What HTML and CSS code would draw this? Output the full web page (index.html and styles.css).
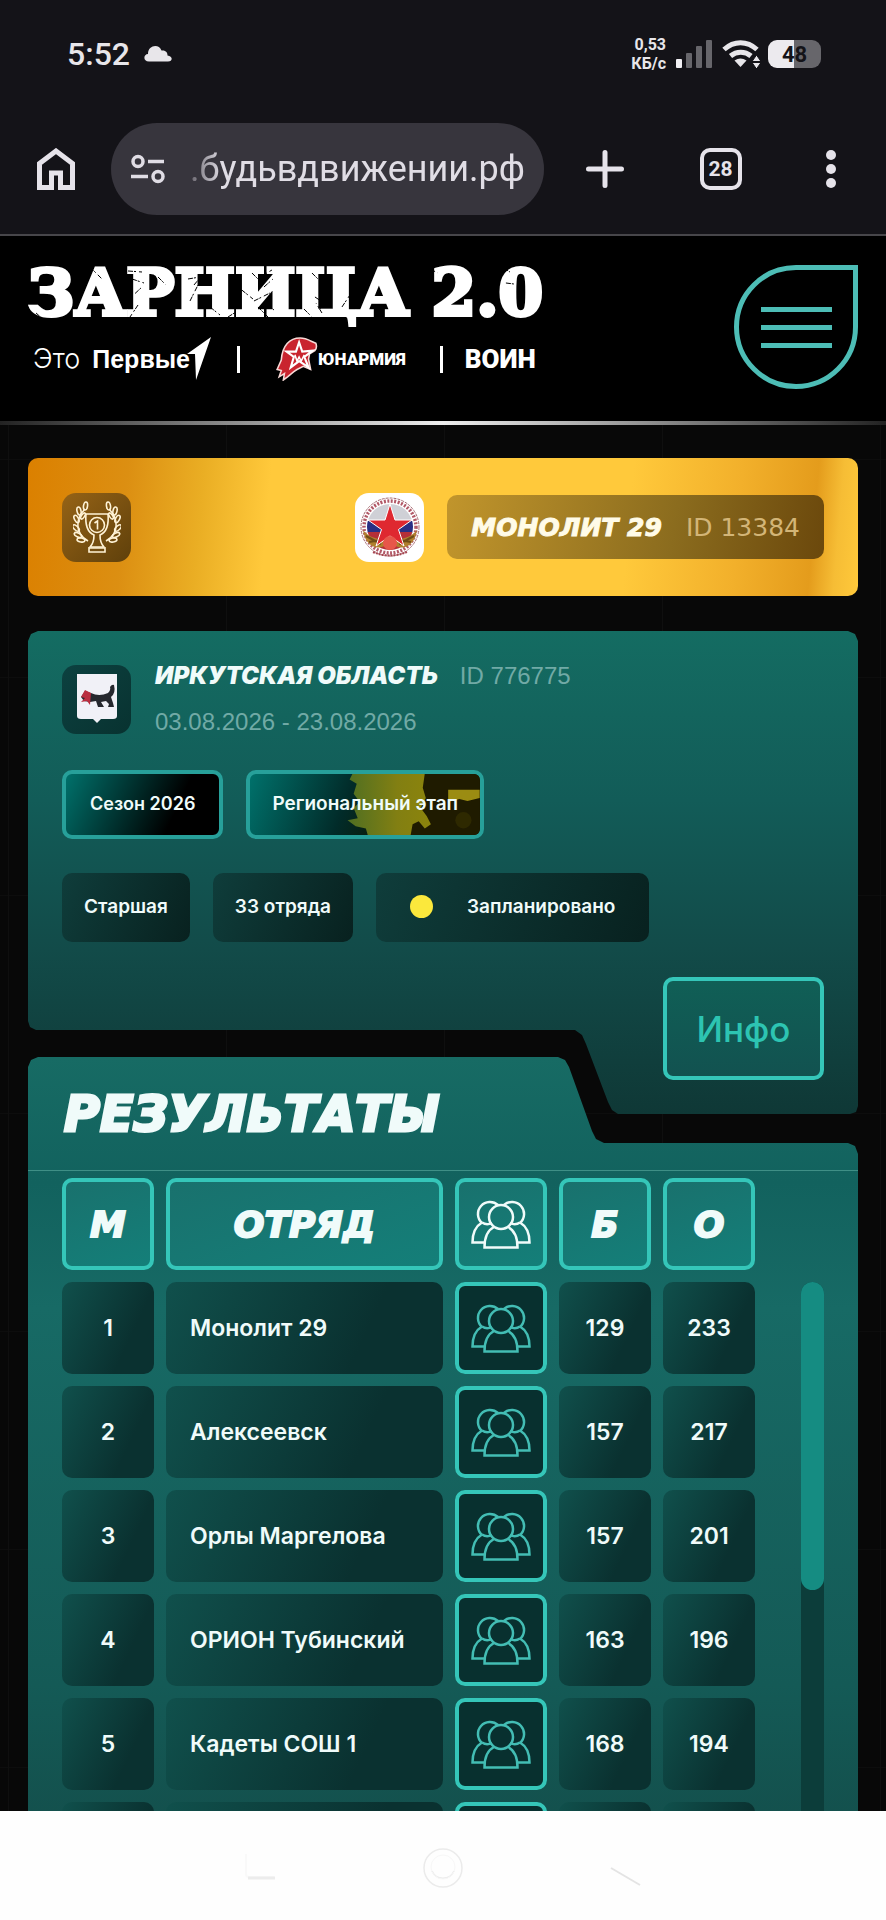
FILE: index.html
```html
<!DOCTYPE html>
<html lang="ru">
<head>
<meta charset="utf-8">
<meta name="viewport" content="width=device-width, initial-scale=1">
<title>Зарница 2.0</title>
<link rel="stylesheet" href="styles.css">
</head>
<body>
<svg class="sprite" aria-hidden="true">
  <symbol id="team" viewBox="0 0 60 50">
    <g fill="none" stroke="currentColor" stroke-width="2.500">
      <path d="M11 24A12 12 0 1 1 27 6"/>
      <path d="M33 6A12 12 0 1 1 49 24"/>
      <circle cx="30" cy="18" r="12"/>
      <path d="M11 23.500C5 27 1.500 33 1.500 43.500H14"/>
      <path d="M49 23.500C55 27 58.500 33 58.500 43.500H46"/>
      <path d="M11 23.500C14 25.500 18 25.500 21 24M49 23.500C46 25.500 42 25.500 39 24"/>
      <path d="M23 28C17 31 13.500 37 13.500 48.500H46.500C46.500 37 43 31 37 28"/>
    </g>
  </symbol>
</svg>

<div class="status">
  <span class="clock">5:52</span>
  <svg class="cloud" width="28" height="16" viewBox="0 0 28 16"><path fill="#e8e6ea" d="M5 15.500C-1.500 15.500-.5 8 4 8 4-1 15-2.500 17.500 4.500 22 4 23.500 6.500 23.500 9.500 29 10 29 15.500 24 15.500Z"/></svg>
  <span class="speed">0,53<br>КБ/с</span>
  <svg class="signal" width="36" height="28" viewBox="0 0 36 28"><g fill="#67666b"><rect x="10" y="13" width="6" height="15" rx="1"/><rect x="20" y="6" width="6" height="22" rx="1"/><rect x="30" y="0" width="6" height="28" rx="1"/></g><rect x="0" y="19" width="6" height="9" rx="1" fill="#f2f0f4"/></svg>
  <svg class="wifi" width="38" height="28" viewBox="0 0 38 28"><g fill="none" stroke="#e8e6ea" stroke-width="5"><path d="M2 9.500C12 .5 25 .5 35 9.500"/><path d="M8.500 16C14.500 11 23 11 29 16"/></g><path fill="#e8e6ea" d="M12.500 20.500Q18.500 16.500 24.500 20.500L18.500 27Z"/><path fill="#e8e6ea" stroke="#141318" stroke-width="1" d="M34.500 15L39 21.500H30ZM34.500 29L39 22.500H30Z"/></svg>
  <span class="battery">48</span>
</div>

<div class="toolbar">
  <button class="tool tool-home" type="button" aria-label="Домой"><svg width="38" height="42" viewBox="0 0 38 42"><path d="M2.500 39.500V15.500L19 3L35.500 15.500V39.500H23.500V25H14.500V39.500Z" fill="none" stroke="#e6e3ea" stroke-width="5"/></svg></button>
  <div class="address">
    <svg width="36" height="30" viewBox="0 0 36 30"><g fill="none" stroke="#e0dde5" stroke-width="3.500"><circle cx="8" cy="7.500" r="5"/><circle cx="28" cy="22.500" r="5"/><path d="M18 7.500H34M1 22.500H18"/></g></svg>
    <input class="url" type="text" value=".будьвдвижении.рф" aria-label="Адрес страницы">
  </div>
  <button class="tool tool-add" type="button" aria-label="Новая вкладка"><svg width="38" height="38" viewBox="0 0 38 38"><path d="M19 2.500V35.500M2.500 19H35.500" stroke="#e6e3ea" stroke-width="5" stroke-linecap="round"/></svg></button>
  <button class="tool tool-tabs" type="button" aria-label="Вкладки"><span class="tabs">28</span></button>
  <button class="tool tool-more" type="button" aria-label="Меню браузера"><svg width="10" height="38" viewBox="0 0 10 38"><g fill="#e6e3ea"><circle cx="5" cy="5" r="5"/><circle cx="5" cy="19" r="5"/><circle cx="5" cy="33" r="5"/></g></svg></button>
</div>

<header class="site-header">
  <div class="brand">
    <div class="wordmark">
      <a class="brand-title" href="#">ЗАРНИЦА 2.0</a>
      <svg class="scratches" viewBox="0 0 515 60" aria-hidden="true"><path d="M62 2l12 12M8 48l10 9M100 6l14 1M104 14l12 4M99 36l15-14M110 40l-8 12M96 30l6-6M162 36l8-16M166 20l5-6M160 14l12-2M205 18l20 16M224 8l10 10M232 12l12-7M236 22l9-8M226 36l16-8M230 42l12 12M240 40l6 5M262 12l8 12M266 30l6 10M284 8l6 6M292 18l4 9M287 32l12 8M294 48l-6-10M300 30l-8 14M314 42l8-12M388 8l-4-6M392 4l14 1M400 3l10 5M448 14l6-7M455 24l-4 8M474 8l8-6M478 18l8 1M476 3l6 4M130 12l8 8M182 42l10 8M200 52l8-5M276 44l8 8"/></svg>
    </div>
    <div class="partners">
      <a class="first" href="#"><span>Это</span><b>Первые</b><svg width="24" height="44" viewBox="0 0 24 44"><path fill="#fff" d="M24 0L9 43 8 17 0 17Z"/></svg></a>
      <i class="bar"></i>
      <a class="army" href="#"><svg width="42" height="44" viewBox="0 0 40 42"><path fill="#c9242e" stroke="#f7d9d6" stroke-width="1.500" d="M1 31L5 22C6 8 13 1 23 1 29 1 33 4 38 6 39 9 38 12 37 13L32 16 31 21 33 31 26 28 20 31 17 33 11 38 7 41 8 35 3 38 5 32Z"/><path d="M22 5L25 14 35 13 27 19 31 29 22 23 14 29 17 19 10 14 19 14Z" fill="none" stroke="#fff" stroke-width="2"/><path d="M18 17L20 23 22 19 24 23 27 17" stroke="#fff" stroke-width="1.500" fill="none"/></svg><b>ЮНАРМИЯ</b></a>
      <i class="bar"></i>
      <a class="warrior" href="#">ВОИН</a>
    </div>
  </div>
  <button class="burger" type="button" aria-label="Меню"><i></i><i></i><i></i></button>
</header>

<main class="page">
  <section class="winner">
    <span class="tile cup"><svg width="48" height="52" viewBox="0 0 48 52"><g fill="none" stroke="#fff3d6" stroke-width="1.600"><path d="M13 13H35C36 24 34 31 27 34C27 40 28 43 31 46H17C20 43 21 40 21 34C14 31 12 24 13 13Z"/><path d="M16 47H32V51H16Z"/><circle cx="24" cy="24" r="7.500"/><path d="M21.500 22L24.500 20V28.500"/><g id="laurel"><path d="M15 40C2 33 2 18 12 8"/><ellipse cx="12.500" cy="5" rx="2" ry="4" transform="rotate(8 12.500 5)"/><ellipse cx="6" cy="10" rx="2" ry="4" transform="rotate(-12 6 10)"/><ellipse cx="3.500" cy="18" rx="2" ry="4" transform="rotate(-28 3.500 18)"/><ellipse cx="3" cy="27" rx="2" ry="4" transform="rotate(-48 3 27)"/><ellipse cx="5" cy="34" rx="2" ry="4" transform="rotate(-65 5 34)"/><ellipse cx="8" cy="39" rx="2" ry="4" transform="rotate(-80 8 39)"/><ellipse cx="10" cy="15" rx="1.500" ry="3.500" transform="rotate(35 10 15)"/></g><use href="#laurel" transform="matrix(-1 0 0 1 48 0)"/></g></svg></span>
    <span class="tile crest"><svg width="62" height="62" viewBox="0 0 62 62"><defs><clipPath id="disc"><circle cx="31" cy="31" r="23"/></clipPath></defs><circle cx="31" cy="31" r="29" fill="#fff" stroke="#a56b72" stroke-width="1" stroke-dasharray="3 1"/><g clip-path="url(#disc)"><path fill="#cfd0d6" d="M8 8h46v18H8z"/><path fill="#292f84" d="M8 25h46v12H8z"/><path fill="#b52f38" d="M8 36h46v18H8z"/></g><circle cx="31" cy="31" r="26" fill="none" stroke="#b25a68" stroke-width="3.500" stroke-dasharray="2 1.500"/><path d="M4 34C7 54 23 55 31 46C39 55 55 54 58 34C51 42 45 42 38 44H24C16 42 11 42 4 34Z" fill="#b0802e"/><path d="M7 40L22 48M10 46L22 44M55 40L40 48M52 46L40 44" stroke="#704d18" stroke-width="2"/><path d="M31 8L36 24H53L39.500 33.500 45 50 31 40 17 50 22.500 33.500 9 24H26Z" fill="#df2830" stroke="#fff" stroke-width="1"/><circle cx="31" cy="47" r="7" fill="#e7564a"/><path d="M14 56Q31 63 48 56" fill="none" stroke="#a74550" stroke-width="2" stroke-dasharray="2 1"/></svg></span>
    <span class="winner-name"><b>МОНОЛИТ 29</b><span>ID 13384</span></span>
  </section>

  <section class="event">
    <div class="event-head">
      <span class="tile region"><svg width="40" height="50" viewBox="0 0 40 50"><path fill="#f1f1f7" d="M0 0H40V42Q40 45 36 45H24L20 49 16 45H4Q0 45 0 42Z"/><path fill="#26282e" d="M14 19Q22 23 31 19Q34 16 33 13 35 10 37 11 39 19 34 23L36 29 37 33H31L32 30 29 27 24 28 27 33H21L19 27 13 28 7 27 4 23 8 17Z"/><path fill="#b92d3f" d="M8 16L14 19 13 31 10 27 4 28 8 24 4 23Z"/></svg></span>
      <div class="event-text">
        <h2><a href="#">ИРКУТСКАЯ ОБЛАСТЬ</a><span>ID 776775</span></h2>
        <p>03.08.2026 - 23.08.2026</p>
      </div>
    </div>
    <div class="chips">
      <span class="chip chip-season">Сезон 2026</span>
      <span class="chip chip-stage">
        <svg class="stage-art" viewBox="0 0 226 61" preserveAspectRatio="xMaxYMid slice" aria-hidden="true">
          <defs><linearGradient id="glow"><stop offset="0" stop-color="#4f6f22"/><stop offset=".6" stop-color="#827f12"/><stop offset="1" stop-color="#8c840c"/></linearGradient></defs>
          <path fill="#1f1b00" d="M160 0H226V61H150Z"/>
          <path fill="url(#glow)" d="M101 0H172L170 14 173 24 168 34 174 42 178 50 172 54 166 47 160 50 158 61H116L114 54 104 52 96 46 106 44 102 34 108 28 102 20 105 10 98 6Z"/>
          <path fill="#9b8c12" d="M195 16H226V24L214 27 206 25 195 28Z"/>
          <circle cx="210" cy="46" r="8" fill="#2e2900"/>
        </svg>
        <span>Региональный этап</span>
      </span>
    </div>
    <div class="chips">
      <span class="chip">Старшая</span>
      <span class="chip">33 отряда</span>
      <span class="chip chip-state"><i></i>Запланировано</span>
    </div>
    <button class="info" type="button">Инфо</button>
  </section>

  <section class="results">
    <h1>РЕЗУЛЬТАТЫ</h1>
    <div class="results-body">
      <table class="board">
        <thead>
          <tr><th>М</th><th>ОТРЯД</th><th aria-label="Состав"><svg class="team"><use href="#team"/></svg></th><th>Б</th><th>О</th></tr>
        </thead>
        <tbody>
          <tr><td>1</td><td>Монолит 29</td><td><button type="button" aria-label="Состав"><svg class="team"><use href="#team"/></svg></button></td><td>129</td><td>233</td></tr>
          <tr><td>2</td><td>Алексеевск</td><td><button type="button" aria-label="Состав"><svg class="team"><use href="#team"/></svg></button></td><td>157</td><td>217</td></tr>
          <tr><td>3</td><td>Орлы Маргелова</td><td><button type="button" aria-label="Состав"><svg class="team"><use href="#team"/></svg></button></td><td>157</td><td>201</td></tr>
          <tr><td>4</td><td>ОРИОН Тубинский</td><td><button type="button" aria-label="Состав"><svg class="team"><use href="#team"/></svg></button></td><td>163</td><td>196</td></tr>
          <tr><td>5</td><td>Кадеты СОШ 1</td><td><button type="button" aria-label="Состав"><svg class="team"><use href="#team"/></svg></button></td><td>168</td><td>194</td></tr>
          <tr><td></td><td></td><td><button type="button" aria-label="Состав"><svg class="team"><use href="#team"/></svg></button></td><td></td><td></td></tr>
        </tbody>
      </table>
      <div class="scroll"><div class="thumb"></div></div>
    </div>
  </section>
</main>

<nav class="system">
  <button type="button" aria-label="Недавние"><svg width="40" height="44" viewBox="0 0 40 44"><path d="M7 10V30Q7 33 10 33H35" fill="none" stroke="#f9f9f9" stroke-width="2"/><path d="M9 34H36" stroke="#ececec" stroke-width="3"/></svg></button>
  <button type="button" aria-label="Домой"><svg width="44" height="44" viewBox="0 0 44 44"><g fill="none" stroke="#ebebeb" stroke-width="1.500"><circle cx="22" cy="24" r="19"/><path d="M11 27A12 12 0 0 0 33 27"/></g><circle cx="22" cy="23" r="12" fill="none" stroke="#f7f7f7"/></svg></button>
  <button type="button" aria-label="Назад"><svg width="40" height="44" viewBox="0 0 40 44"><path d="M4 24L33 41" stroke="#e4e4e4" stroke-width="2"/></svg></button>
</nav>
</body>
</html>
```

FILE: styles.css
```css
* { box-sizing: border-box; }

body {
  margin: 0;
  height: 100vh;
  display: flex;
  flex-direction: column;
  overflow: hidden;
  background: #141318;
  color: #f0fbfa;
  font-family: Inter, "Liberation Sans", sans-serif;
}

a { color: inherit; text-decoration: none; }
button { padding: 0; border: 0; background: none; font: inherit; color: inherit; }
svg { display: block; flex: none; }
.sprite { position: absolute; width: 0; height: 0; }

/* phone status bar */
.status {
  flex: none;
  height: 108px;
  padding: 0 65px 0 67px;
  display: flex;
  align-items: center;
  font-family: Roboto, sans-serif;
  color: #e8e6ea;
}
.clock { font-size: 32px; font-weight: 500; }
.cloud { margin-left: 14px; }
.speed { margin-left: auto; font-size: 16px; line-height: 19px; font-weight: 700; text-align: right; }
.signal { margin-left: 10px; }
.wifi { margin-left: 10px; }
.battery {
  width: 53px;
  height: 28px;
  margin-left: 8px;
  border-radius: 9px;
  background: linear-gradient(90deg, #eceaee 50%, #67666b 50%);
  color: #141318;
  font-size: 22px;
  line-height: 29px;
  font-weight: 700;
  text-align: center;
}

/* browser toolbar */
.toolbar {
  flex: none;
  height: 128px;
  padding-top: 15px;
  display: flex;
  align-items: flex-start;
  border-bottom: 2px solid #47464a;
}
.tool { height: 92px; display: flex; align-items: center; justify-content: center; }
.tool-home { width: 111px; }
.tool-add { width: 121px; }
.tool-tabs { width: 111px; }
.tool-more { width: 110px; }
.address {
  flex: 1;
  min-width: 0;
  height: 92px;
  padding: 0 12px 0 19px;
  display: flex;
  align-items: center;
  gap: 24px;
  border-radius: 46px;
  background: #37353d;
}
.url {
  flex: 1;
  min-width: 0;
  padding: 0;
  border: 0;
  background: none;
  color: #e0dde5;
  font: 36px Roboto, sans-serif;
  -webkit-mask-image: linear-gradient(90deg, rgba(0, 0, 0, .3), #000 32px);
  mask-image: linear-gradient(90deg, rgba(0, 0, 0, .3), #000 32px);
}
.tabs {
  width: 42px;
  height: 42px;
  border: 4px solid #e6e3ea;
  border-radius: 10px;
  color: #e6e3ea;
  font: 700 21px/35px Roboto, sans-serif;
}

/* site header */
.site-header {
  flex: none;
  height: 189px;
  padding: 29px 28px 0;
  display: flex;
  justify-content: space-between;
  align-items: flex-start;
  background: #000;
  border-bottom: 4px solid;
  border-image: linear-gradient(90deg, #222, #eee 50%, #222) 1;
}
.wordmark { position: relative; }
.brand-title {
  display: block;
  color: #fff;
  font: 700 64px/56px "DejaVu Serif", serif;
  -webkit-text-stroke: 4px #fff;
  white-space: nowrap;
}
.scratches { position: absolute; inset: 0; width: 100%; fill: none; stroke: #000; stroke-width: 1; stroke-dasharray: 5 1 2 3; }
.partners { height: 44px; margin-top: 16px; display: flex; align-items: center; color: #fff; }
.first { display: flex; align-items: center; padding-left: 5px; font: 25px/40px "Liberation Sans", sans-serif; }
.first span { font: 300 27px/40px Inter, sans-serif; margin-right: 12px; }
.first svg { margin-left: -3px; }
.bar { width: 3px; height: 27px; margin: 0 36px 0 26px; background: #fff; }
.army + .bar { margin: 0 22px 0 34px; }
.army { display: flex; align-items: center; font: 17px/40px Roboto, sans-serif; }
.army b { font-weight: 900; }
.warrior { font: 900 26px/40px Roboto, sans-serif; }
.burger {
  width: 124px;
  height: 124px;
  border: 5px solid #4dbdb6;
  border-radius: 50% 0 50% 50%;
  display: flex;
  flex-direction: column;
  align-items: center;
  justify-content: center;
  gap: 13px;
}
.burger i { width: 71px; height: 5px; background: #4dbdb6; }

/* page */
.page {
  flex: 1;
  min-height: 0;
  overflow: hidden;
  padding: 33px 28px 0;
  background:
    repeating-linear-gradient(90deg, transparent 0 8px, #0f0f0f 8px 9px, transparent 9px 218px),
    repeating-linear-gradient(180deg, transparent 0 34px, #0d0d0d 34px 35px, transparent 35px 218px),
    #080808;
}
.tile {
  flex: none;
  width: 69px;
  height: 69px;
  border-radius: 14px;
  display: flex;
  align-items: center;
  justify-content: center;
}

.winner {
  height: 138px;
  padding: 0 34px;
  display: flex;
  align-items: center;
  border-radius: 10px;
  background: linear-gradient(95deg, #db8000 0%, #dc8f12 12%, #eaae24 21%, #ffc93b 29%, #ffc93b 72%, #f2b02b 85%, #e49c1c 94%, #f6bd35 97%, #ffc93b 100%);
}
.cup { background: linear-gradient(135deg, #966316, #5f400b); }
.crest { margin-left: auto; background: #fff; }
.winner-name {
  height: 64px;
  margin-left: 23px;
  padding: 0 24px;
  display: flex;
  align-items: center;
  gap: 24px;
  border-radius: 10px;
  background: linear-gradient(100deg, #c1952c, #8b6c1e 60%, #6b480c);
  color: #d3b577;
  font: 25px "DejaVu Sans", sans-serif;
}
.winner-name b { color: #fffbe8; font-style: italic; -webkit-text-stroke: 1px; }

.event {
  margin-top: 35px;
  height: 483px;
  padding: 22px 34px 34px;
  display: flex;
  flex-direction: column;
  background: linear-gradient(180deg, #146c62, #125c58 35%, #124b49 66%, #0f3836);
  clip-path: polygon(0 10px, 3px 3px, 10px 0, calc(100% - 10px) 0, calc(100% - 3px) 3px, 100% 10px, 100% calc(100% - 8px), calc(100% - 2px) calc(100% - 2px), calc(100% - 8px) 100%, calc(100% - 240px) 100%, calc(100% - 246px) calc(100% - 4px), calc(100% - 250px) calc(100% - 12px), calc(100% - 272px) calc(100% - 70px), calc(100% - 276px) calc(100% - 79px), calc(100% - 283px) calc(100% - 84px), 8px calc(100% - 84px), 2px calc(100% - 87px), 0 calc(100% - 93px));
}
.event-head { display: flex; align-items: center; gap: 24px; }
.region { background: linear-gradient(135deg, #0c4140, #083230); }
.event-text h2, .event-text p { margin: 0; line-height: 46px; font-size: 24px; }
.event-text h2 { display: flex; gap: 22px; }
.event-text a { font-weight: 900; font-style: italic; }
.event-text span, .event-text p { color: #71aaa6; font-family: "Liberation Sans", sans-serif; font-weight: 400; }
.chips { margin-top: 34px; display: flex; gap: 23px; }
.event-head + .chips { margin-top: 25px; }
.chip {
  height: 69px;
  padding: 0 22px 2px;
  display: flex;
  align-items: center;
  border-radius: 10px;
  background: linear-gradient(115deg, #0f3d3b, #08211f);
  font-size: 19px;
  font-weight: 600;
  white-space: nowrap;
}
.chip-season, .chip-stage { border: 4px solid #27a09a; }
.chip-season { padding: 0 24px 2px; background: linear-gradient(115deg, #00716b, #000 70%); font-size: 18px; }
.chip-stage { position: relative; overflow: hidden; background: linear-gradient(110deg, #00716b, #012b29 42%, #0a1d0a 60%, #1d1900); }
.chip-stage span { position: relative; }
.stage-art { position: absolute; inset: 0; width: 100%; height: 100%; }
.chip-state { padding: 0 34px 2px; gap: 34px; }
.chip-state i { width: 23px; height: 23px; border-radius: 50%; background: #fbe83c; }
.info {
  width: 161px;
  height: 104px;
  margin: 35px 0 0 auto;
  border: 4px solid #35c6b9;
  border-radius: 10px;
  background: linear-gradient(180deg, #105f56, #125250);
  color: #2dc4b2;
  font-size: 35px;
  font-weight: 500;
}

.results {
  margin-top: -57px;
  background: linear-gradient(180deg, #176b64, #12625e 15%, #176a65 30%, #145a56 75%, #134b48);
  clip-path: polygon(0 10px, 3px 3px, 10px 0, calc(100% - 300px) 0, calc(100% - 293px) 3px, calc(100% - 289px) 10px, calc(100% - 266px) 74px, calc(100% - 262px) 82px, calc(100% - 254px) 86px, calc(100% - 10px) 86px, calc(100% - 3px) 89px, 100% 97px, 100% 100%, 0 100%);
}
h1 {
  height: 114px;
  margin: 0;
  padding-left: 36px;
  border-bottom: 1px solid #3f8f86;
  font: italic 700 49px/116px "DejaVu Sans", sans-serif;
  -webkit-text-stroke: 3px;
}
.results-body { padding: 7px 34px 0; display: flex; gap: 46px; }
.board { flex: 1; display: block; }
.board thead, .board tbody { display: grid; gap: 12px; }
.board tbody { margin-top: 12px; }
.board tr { display: grid; grid-template-columns: 92px minmax(0, 1fr) 92px 92px 92px; gap: 12px; }
.board th, .board td {
  height: 92px;
  padding: 0;
  display: flex;
  align-items: center;
  justify-content: center;
  border-radius: 10px;
}
.board th {
  border: 4px solid #35c6b9;
  background: linear-gradient(160deg, #19716d, #147f79);
  font: italic 700 36px "DejaVu Sans", sans-serif;
  -webkit-text-stroke: 2px;
}
.board td { background: linear-gradient(115deg, #10504c, #0a3130 70%); font-size: 23px; font-weight: 600; }
.board td:nth-child(2) { padding-left: 24px; justify-content: flex-start; }
.board td button {
  width: 100%;
  height: 100%;
  display: flex;
  align-items: center;
  justify-content: center;
  border: 4px solid #35c6b9;
  border-radius: 10px;
  background: #08302f;
  color: #43bdb4;
}
.team { width: 60px; height: 50px; }
.scroll { width: 23px; margin-top: 104px; border-radius: 12px; background: #0c3d3a; }
.thumb { height: 308px; border-radius: 12px; background: #158c82; }

.system { flex: none; height: 109px; padding: 0 188px; display: flex; align-items: center; justify-content: center; gap: 142px; background: #fefefe; }
```
